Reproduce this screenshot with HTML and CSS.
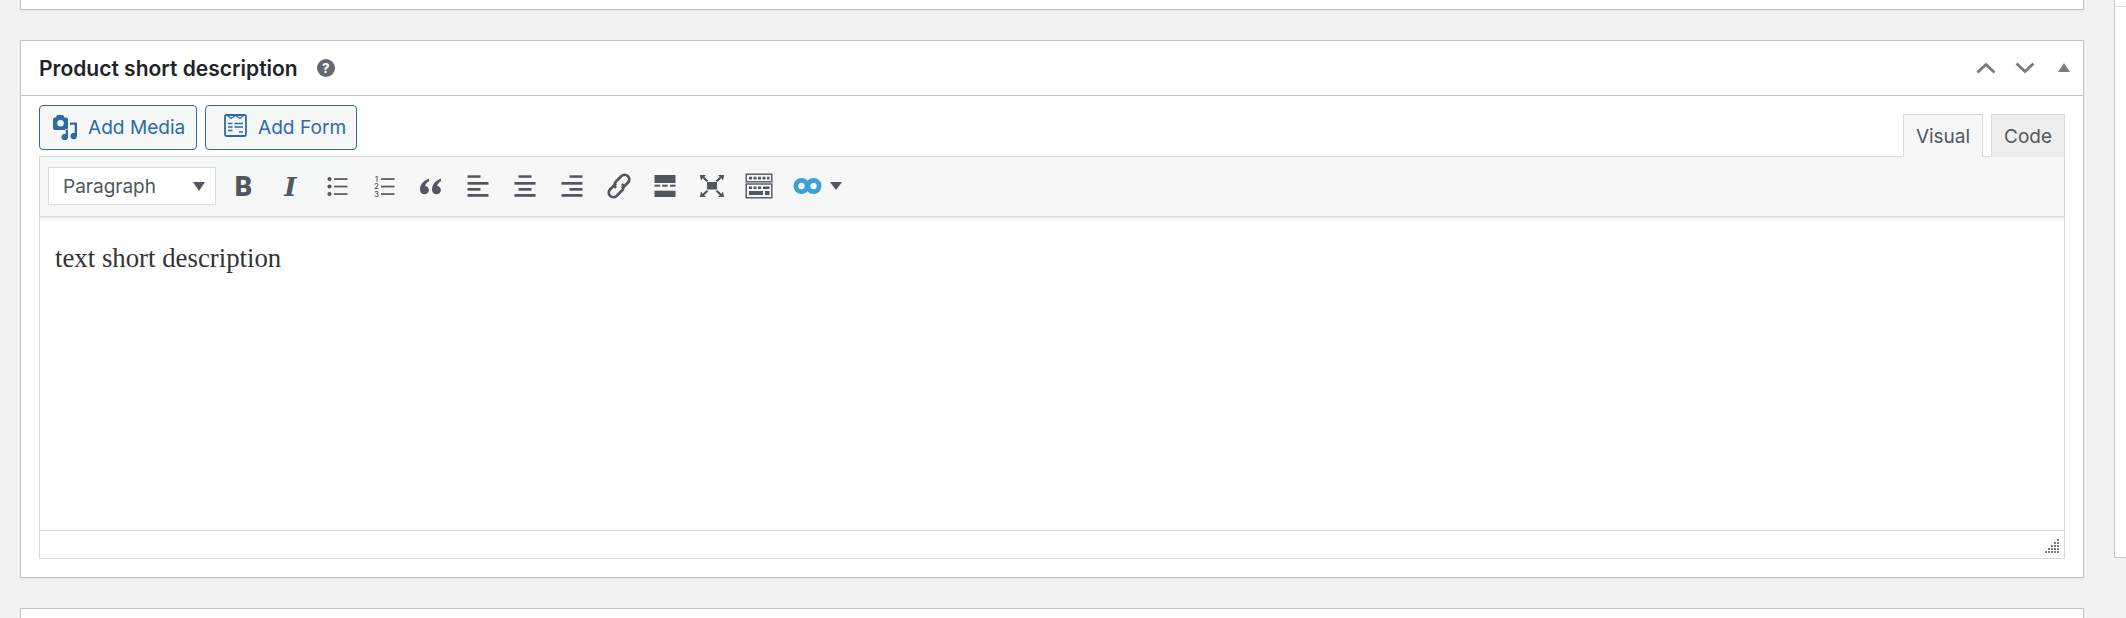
FILE: index.html
```html
<!DOCTYPE html>
<html lang="en">
<head>
<meta charset="utf-8">
<title>Product short description</title>
<link rel="stylesheet" href="styles.css">
</head>
<body>
<div class="main">
  <div class="box box-top"></div>
  <section class="box box-editor">
    <header class="box-head">
      <h2 class="box-title">Product short description</h2>
      <span class="help">?</span>
      <div class="head-actions">
        <svg class="chev" width="20" height="12" viewBox="0 0 20 12"><path d="M1.5 10.5 10 2.5l8.500 8" fill="none" stroke="#787c82" stroke-width="2.800"/></svg>
        <svg class="chev" width="20" height="12" viewBox="0 0 20 12"><path d="M1.500 1.500 10 9.500l8.500-8" fill="none" stroke="#787c82" stroke-width="2.800"/></svg>
        <svg class="tri" width="12" height="9" viewBox="0 0 12 9"><path d="M6 0l6 9H0z" fill="#787c82"/></svg>
      </div>
    </header>
    <div class="box-body">
      <div class="editor-tools">
        <div class="media-btns">
          <a class="btn btn-media">
            <svg width="26" height="26" viewBox="0 0 26 26"><path fill="#2c6ba8" fill-rule="evenodd" d="M5 1h6l1.500 2.500H14a2 2 0 0 1 2 2V14a2 2 0 0 1-2 2H3a2 2 0 0 1-2-2V5.500a2 2 0 0 1 2-2h1zM8.500 6a3.300 3.300 0 1 0 0 6.600 3.300 3.300 0 0 0 0-6.600z"/><path fill="#2c6ba8" stroke="#f6f7f7" stroke-width="1.200" paint-order="stroke" d="M18 8.500h7V22a3.300 3.300 0 1 1-2.300-3.100v-8.100H18zM16 15.500V23a3.300 3.300 0 1 1-2.300-3.100v-4.400z"/></svg>
            <span>Add Media</span>
          </a>
          <a class="btn btn-form">
            <svg class="form-icon" width="24" height="24" viewBox="0 0 24 24"><rect x="2" y="2" width="21" height="21" rx="1.500" fill="none" stroke="#2c6ba8" stroke-width="1.800"/><path d="M4.500 2.500l3.500 3 4.500-3 4.500 3 3.500-3" fill="none" stroke="#2c6ba8" stroke-width="1.100"/><path d="M5 10.500h4.500m2 0H20M5 14h4.500m2 0H20M5 17.500h4.500m6.500 1.500h4" fill="none" stroke="#2c6ba8" stroke-width="1.700"/></svg>
            <span>Add Form</span>
          </a>
        </div>
        <div class="tabs">
          <button class="tab tab-on">Visual</button>
          <button class="tab">Code</button>
        </div>
      </div>
      <div class="editor">
        <div class="toolbar">
          <div class="format">
            <span>Paragraph</span>
            <svg width="12" height="9" viewBox="0 0 12 9"><path d="M0 0h12L6 9z" fill="#50575e"/></svg>
          </div>
          <div class="tool"><span class="t-b">B</span></div>
          <div class="tool"><span class="t-i">I</span></div>
          <div class="tool"><svg width="28" height="28" viewBox="0 0 28 28"><g fill="#50575e"><circle cx="6.500" cy="6" r="2.100"/><circle cx="6.500" cy="13.500" r="2.100"/><circle cx="6.500" cy="21" r="2.100"/><rect x="11" y="5.200" width="13.500" height="1.700"/><rect x="11" y="12.700" width="13.500" height="1.700"/><rect x="11" y="20.200" width="13.500" height="1.700"/></g></svg></div>
          <div class="tool"><svg width="28" height="28" viewBox="0 0 28 28"><g fill="#50575e"><text class="t-n" x="6.500" y="8.500" text-anchor="middle">1</text><text class="t-n" x="6.500" y="16" text-anchor="middle">2</text><text class="t-n" x="6.500" y="23.500" text-anchor="middle">3</text><rect x="11" y="5.200" width="13.500" height="1.700"/><rect x="11" y="12.700" width="13.500" height="1.700"/><rect x="11" y="20.200" width="13.500" height="1.700"/></g></svg></div>
          <div class="tool"><svg width="28" height="28" viewBox="0 0 28 28"><path fill="#50575e" d="M11.800 5.500C7.500 7.300 3 11 3 16.500c0 2.800 1.900 4.800 4.500 4.800 2.500 0 4.400-1.800 4.400-4.200 0-2.300-1.700-3.900-3.800-4 .4-1.900 2-3.800 4-5zM23.800 5.500c-4.300 1.800-8.800 5.500-8.800 11 0 2.800 1.900 4.800 4.500 4.800 2.500 0 4.400-1.800 4.400-4.200 0-2.300-1.700-3.900-3.800-4 .4-1.900 2-3.800 4-5z"/></svg></div>
          <div class="tool"><svg width="28" height="28" viewBox="0 0 28 28"><g fill="#50575e"><rect x="3.500" y="2.300" width="13" height="2.500"/><rect x="3.500" y="9" width="21" height="2.700"/><rect x="3.500" y="15" width="13" height="2.700"/><rect x="3.500" y="21" width="21" height="2.800"/></g></svg></div>
          <div class="tool"><svg width="28" height="28" viewBox="0 0 28 28"><g fill="#50575e"><rect x="7.500" y="2.300" width="13" height="2.500"/><rect x="3.500" y="9" width="21" height="2.700"/><rect x="7.500" y="15" width="13" height="2.700"/><rect x="3.500" y="21" width="21" height="2.800"/></g></svg></div>
          <div class="tool"><svg width="28" height="28" viewBox="0 0 28 28"><g fill="#50575e"><rect x="11.500" y="2.300" width="13" height="2.500"/><rect x="3.500" y="9" width="21" height="2.700"/><rect x="11.500" y="15" width="13" height="2.700"/><rect x="3.500" y="21" width="21" height="2.800"/></g></svg></div>
          <div class="tool"><svg width="28" height="28" viewBox="0 0 28 28"><g fill="none" stroke="#50575e" stroke-width="2.800"><path d="M11 10.500 5 16.500a4.600 4.600 0 0 0 6.500 6.500l5.500-5.500a4.600 4.600 0 0 0 0-6.500"/><path d="M17 15.500l6-6A4.600 4.600 0 0 0 16.500 3L11 8.500a4.600 4.600 0 0 0 0 6.500"/></g></svg></div>
          <div class="tool"><svg width="28" height="28" viewBox="0 0 28 28"><g fill="#50575e"><rect x="3.500" y="2" width="21" height="8"/><rect x="3.500" y="11.700" width="5.500" height="2"/><rect x="11.200" y="11.700" width="5.500" height="2"/><rect x="19" y="11.700" width="5.500" height="2"/><rect x="3.500" y="17.700" width="21" height="6.300"/></g></svg></div>
          <div class="tool"><svg width="28" height="28" viewBox="0 0 28 28"><g fill="#50575e"><rect x="9" y="9" width="10" height="7.500"/><path d="M1.800 2h6.200L6.200 3.800l4.100 3.700-1.600 1.600-4.100-3.800L3 7.500zM26.200 2H20l1.800 1.800-4.100 3.700 1.600 1.600 4.100-3.800 1.600 2.200zM1.800 24h6.200l-1.800-1.800 4.100-3.700-1.600-1.600-4.100 3.800L3 18.500zM26.200 24H20l1.800-1.800-4.100-3.700 1.600-1.600 4.100 3.800 1.600-2.200z"/></g></svg></div>
          <div class="tool"><svg width="28" height="28" viewBox="0 0 28 28"><g fill="none" stroke="#50575e" stroke-width="1.400"><rect x="1.200" y="1.200" width="25.600" height="7.600"/><rect x="1.200" y="11" width="25.600" height="13.800"/></g><g fill="#50575e"><path d="M4 3.800h3v2.600H4zM8.500 3.800h3v2.600h-3zM13 3.800h3v2.600h-3zM17.500 3.800h3v2.600h-3zM22 3.800h2.500v2.600H22zM4 13.500h3v2.500H4zM8.500 13.500h3V16h-3zM13 13.500h3V16h-3zM18 13.500h6.500V16H18zM4 18h14v4H4zM20 18h4.500v4H20z"/></g></svg></div>
          <div class="addon">
            <svg width="29" height="18" viewBox="0 0 29 18"><g fill="none" stroke="#3f9fd8" stroke-width="4.800"><circle cx="8.500" cy="9" r="5.600"/><circle cx="20.500" cy="9" r="5.600"/></g></svg>
            <svg width="12" height="8" viewBox="0 0 12 8"><path d="M0 0h12L6 8z" fill="#50575e"/></svg>
          </div>
        </div>
        <div class="content"><p>text short description</p></div>
        <div class="status">
          <svg width="16" height="15" viewBox="0 0 16 15" fill="#787c82"><path d="M12 0h2v2h-2zM12 3h2v2h-2zM9 3h2v2H9zM12 6h2v2h-2zM9 6h2v2H9zM6 6h2v2H6zM12 9h2v2h-2zM9 9h2v2H9zM6 9h2v2H6zM3 9h2v2H3zM12 12h2v2h-2zM9 12h2v2H9zM6 12h2v2H6zM3 12h2v2H3zM0 12h2v2H0z"/></svg>
        </div>
      </div>
    </div>
  </section>
  <div class="box box-next"></div>
</div>
<aside class="side"><div class="side-head"></div></aside>
</body>
</html>
```
FILE: styles.css
```css
* { box-sizing: border-box; }
html, body { margin: 0; height: 618px; overflow: hidden; }
body {
  display: flex;
  background: #f1f2f4;
  font-family: Inter, "Noto Sans", sans-serif;
  color: #1d2327;
}
.main { width: 2064px; margin-left: 20px; flex: none; }
.box {
  background: #fff;
  border: 1px solid #c3c4c7;
  box-shadow: 0 1px 1px rgba(0,0,0,.04);
}
.box-top { height: 10px; border-top: 0; margin-bottom: 30px; }
.box-editor { height: 538px; margin-bottom: 30px; }
.box-next { height: 40px; }
.box-head {
  height: 55px;
  display: flex;
  align-items: center;
  padding: 0 13px 0 18px;
  border-bottom: 1px solid #c3c4c7;
}
.box-title { margin: 0; font-size: 21px; font-weight: 600; }
.help {
  width: 18px; height: 18px; margin-left: 19px;
  border-radius: 50%;
  background: #646970; color: #fff;
  font-size: 13px; font-weight: 800; line-height: 18px; text-align: center;
}
.head-actions { margin-left: auto; display: flex; align-items: center; }
.chev { margin-right: 19px; }
.tri { margin-left: 4px; margin-top: -2px; }
.box-body { padding: 0 18px; }
.editor-tools { display: flex; justify-content: space-between; height: 60px; padding-top: 9px; }
.media-btns { display: flex; gap: 8px; height: 45px; }
.btn {
  display: flex; align-items: center;
  height: 45px;
  padding-bottom: 1px;
  background: #f6f7f7;
  border: 1px solid #2c6ba8;
  border-radius: 4px;
  color: #2c6ba8;
  font-size: 19.100px;
}
.btn-media { width: 158px; padding-left: 12px; gap: 10px; }
.btn-form { width: 152px; padding-left: 17px; gap: 11px; }
.form-icon { margin-top: -4px; }
.tabs { display: flex; gap: 8px; align-self: flex-end; position: relative; top: 1px; z-index: 1; }
.tab {
  height: 43px; padding: 0;
  background: #eeeeef;
  border: 1px solid #dcdcde;
  border-bottom: 0;
  color: #50575e;
  font: 19px Inter, "Noto Sans", sans-serif;
}
.tab-on { width: 80px; background: #f6f7f7; }
.tab:not(.tab-on) { width: 74px; }
.editor { height: 403px; border: 1px solid #dcdcde; display: flex; flex-direction: column; }
.toolbar {
  height: 60px; flex: none;
  display: flex; align-items: flex-start;
  padding: 10px 0 0 8px;
  background: #f6f7f7;
  border-bottom: 1px solid #dcdcde;
  box-shadow: 0 1px 2px rgba(0,0,0,.12);
  position: relative;
}
.format {
  width: 168px; height: 38px;
  margin-right: 4px;
  display: flex; align-items: center; justify-content: space-between;
  padding: 0 10px 0 14px;
  background: #fff;
  border: 1px solid #dcdcde;
  color: #50575e;
  font-size: 19px;
}
.tool { width: 46.9px; height: 28px; margin-top: 6px; display: flex; justify-content: center; flex: none; }
.t-b { font: 900 27px/28px Roboto, sans-serif; color: #50575e; }
.t-i { font: italic 700 26px/28px "DejaVu Serif", serif; color: #50575e; }
.t-n { font: 500 8px Inter, sans-serif; }
.addon { display: flex; align-items: center; gap: 8px; margin: 10px 0 0 10px; }
.content { flex: 1; padding: 0 15px; background: #fff; }
.content p {
  margin: 0; padding-top: 21px;
  font: 26.800px/40px "Liberation Serif", serif;
  color: #333;
}
.status {
  height: 28px; flex: none;
  display: flex; align-items: flex-start; justify-content: flex-end;
  padding: 8px 3px 0 0;
  border-top: 1px solid #dcdcde;
}
.side {
  flex: 1; height: 558px; margin-left: 30px;
  background: #fff;
  border: 1px solid #c3c4c7; border-top: 0; border-right: 0;
}
.side-head { height: 7px; border-bottom: 1px solid #dcdcde; }
```
